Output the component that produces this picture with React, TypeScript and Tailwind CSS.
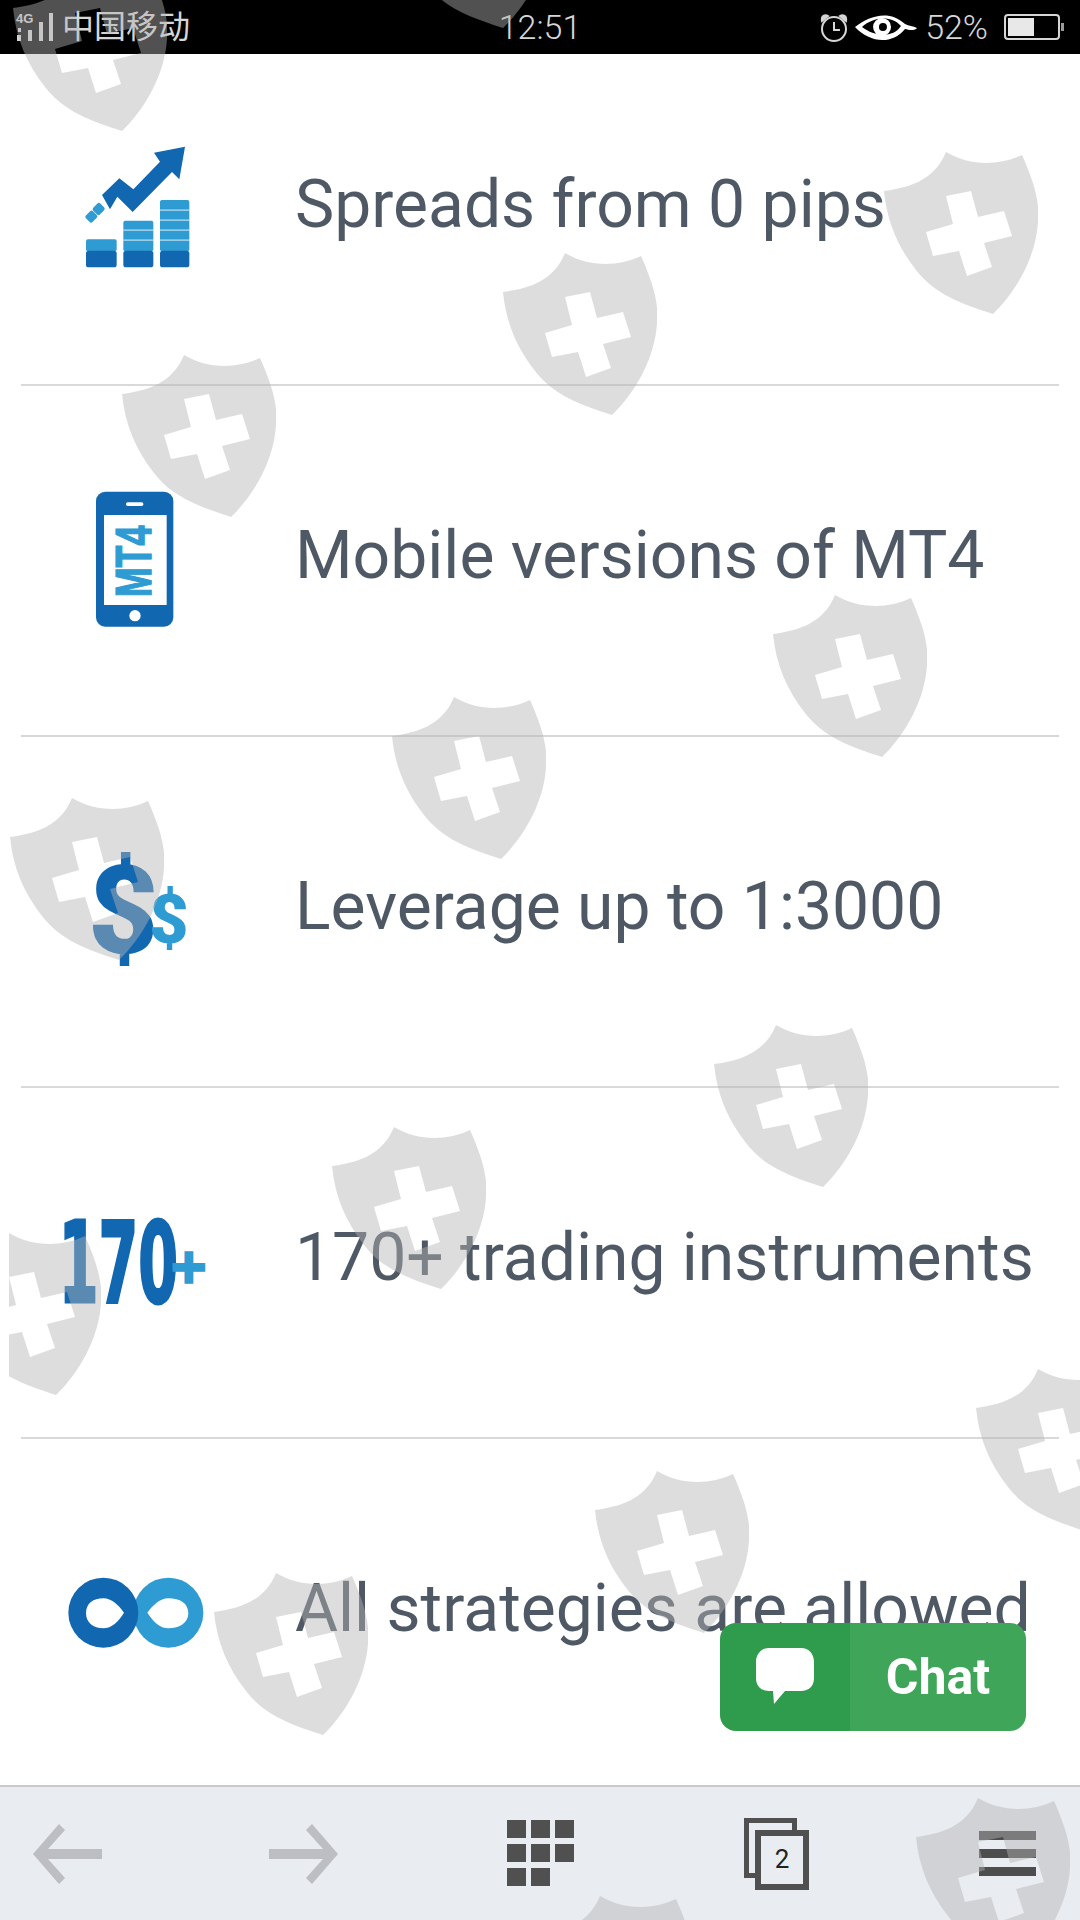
import React from "react";

const DARK = "#1267b1";
const LIGHT = "#2f9bd3";

const shields = [
  [13, -31], [394, -134], [884, 152], [503, 253], [122, 355], [773, 595], [392, 697], [10, 798],
  [714, 1025], [332, 1127], [-53, 1233], [976, 1369], [595, 1471], [214, 1573], [916, 1798], [538, 1896],
];

function Shields() {
  return (
    <div className="absolute top-0 bottom-0 left-[9px] right-0 overflow-hidden pointer-events-none">
      {shields.map(([x, y]) => (
        <svg key={x + "-" + y} width="154" height="162" viewBox="0 0 154 162" className="absolute" style={{ left: x - 9, top: y }}>
          <path
            fillRule="evenodd"
            fill="#b4b4b4"
            fillOpacity="0.45"
            d="M0 39C22 36 50 30 62 0C85 14 115 14 138 3C150 30 156 50 154 70C152 105 132 140 109 162C78 152 50 142 32 118C14 95 3 70 0 39ZM62 44L87 39L94 65L120 59L128 84L100 91L108 115L83 124L75 99L49 104L42 80L69 72Z"
          />
        </svg>
      ))}
    </div>
  );
}

function ChartIcon() {
  return (
    <svg width="180" height="160" viewBox="-60 0 540 480">
      <path fill={DARK} d="M126 195L178 145L220 178L300 95L282 68L375 50L358 148L336 126L218 246L172 200L150 238Z" />
      <rect x="102" y="222" width="28" height="30" rx="6" fill={LIGHT} transform="rotate(45 116 237)" />
      <rect x="80" y="245" width="28" height="30" rx="6" fill={LIGHT} transform="rotate(45 94 260)" />
      <rect x="78" y="328" width="92" height="36" rx="6" fill={LIGHT} />
      <rect x="190" y="272" width="90" height="92" rx="6" fill={LIGHT} />
      <rect x="300" y="210" width="88" height="154" rx="6" fill={LIGHT} />
      <g fill="#ffffff" fillOpacity="0.5">
        <rect x="190" y="298" width="90" height="5" />
        <rect x="190" y="328" width="90" height="5" />
        <rect x="300" y="238" width="88" height="5" />
        <rect x="300" y="268" width="88" height="5" />
        <rect x="300" y="298" width="88" height="5" />
        <rect x="300" y="328" width="88" height="5" />
      </g>
      <rect x="78" y="362" width="92" height="50" rx="8" fill={DARK} />
      <rect x="190" y="362" width="90" height="50" rx="8" fill={DARK} />
      <rect x="300" y="362" width="88" height="50" rx="8" fill={DARK} />
    </svg>
  );
}

function PhoneIcon() {
  return (
    <svg width="180" height="160" viewBox="-60 33 540 480">
      <rect x="108" y="65" width="232" height="405" rx="28" fill={DARK} />
      <rect x="132" y="135" width="188" height="270" fill="#ffffff" />
      <rect x="198" y="97" width="52" height="11" rx="5" fill="#ffffff" />
      <circle cx="225" cy="437" r="17" fill="#ffffff" />
      <text
        transform="translate(272 382) rotate(-90)"
        fontFamily="'Liberation Sans', sans-serif"
        fontWeight="700"
        fontSize="150"
        textLength="215"
        lengthAdjust="spacingAndGlyphs"
        fill={LIGHT}
        stroke={LIGHT}
        strokeWidth="4"
      >
        MT4
      </text>
    </svg>
  );
}

function DollarIcon() {
  return (
    <svg width="180" height="160" viewBox="120 126 540 480">
      <text x="264" y="490" fontFamily="Roboto, sans-serif" fontWeight="900" fontSize="365" fill={DARK}>
        $
      </text>
      <text x="447" y="458" fontFamily="Roboto, sans-serif" fontWeight="900" fontSize="205" fill={LIGHT}>
        $
      </text>
    </svg>
  );
}

function PlusIcon() {
  return (
    <svg width="180" height="160" viewBox="120 -21 540 480">
      <text x="176" y="336" fontFamily="'DejaVu Sans', sans-serif" fontWeight="700" fontSize="335" textLength="358" lengthAdjust="spacingAndGlyphs" fill={DARK} stroke={DARK} strokeWidth="9">
        170
      </text>
      <text x="508" y="276" fontFamily="'DejaVu Sans', sans-serif" fontWeight="700" fontSize="140" fill={LIGHT} stroke={LIGHT} strokeWidth="10">
        +
      </text>
    </svg>
  );
}

function InfinityIcon() {
  return (
    <svg width="180" height="160" viewBox="-30 -108 540 480" fillRule="evenodd">
      <path
        fill={LIGHT}
        d="M250 128A105 105 0 1 1 460 128A105 105 0 1 1 250 128ZM292 128C310 155 330 175 355 175C390 175 415 158 415 130C415 100 390 85 355 85C330 85 310 105 292 128Z"
      />
      <path
        fill={DARK}
        d="M55 128A105 105 0 1 1 265 128A105 105 0 1 1 55 128ZM108 130C108 158 130 175 160 175C185 175 205 155 222 128C205 105 185 85 160 85C130 85 108 100 108 130Z"
      />
    </svg>
  );
}

const rows = [
  { text: "Spreads from 0 pips", icon: <ChartIcon /> },
  { text: "Mobile versions of MT4", icon: <PhoneIcon /> },
  { text: "Leverage up to 1:3000", icon: <DollarIcon /> },
  { text: "170+ trading instruments", icon: <PlusIcon /> },
  { text: "All strategies are allowed", icon: <InfinityIcon /> },
];

function StatusBar() {
  return (
    <div className="h-[54px] shrink-0 bg-black flex items-center justify-between text-[#d6d6d6] text-[34px] font-['Roboto','Noto_Sans_CJK_SC',sans-serif] font-light">
      <div className="flex items-center w-[340px]">
        <svg width="58" height="54" viewBox="0 0 58 54" className="ml-[13px] mr-[-9px]">
          <text x="3" y="23" fontFamily="'Liberation Sans', sans-serif" fontWeight="700" fontSize="13" fill="#d6d6d6">4G</text>
          <rect x="15" y="30" width="4" height="11" fill="#d6d6d6" />
          <rect x="26" y="22" width="4" height="19" fill="#d6d6d6" />
          <rect x="36" y="13" width="4" height="28" fill="#d6d6d6" />
          <rect x="4" y="35" width="4" height="6" fill="#d6d6d6" />
          <rect x="5" y="28" width="3" height="4" fill="#d6d6d6" />
        </svg>
        <span className="leading-none text-[32px] font-normal">中国移动</span>
      </div>
      <span className="leading-none">12:51</span>
      <div className="flex items-center justify-end w-[340px]">
        <svg width="30" height="32" viewBox="0 0 30 32" fill="none" stroke="#d6d6d6" strokeWidth="2" className="mr-[6px]">
          <circle cx="15" cy="18" r="12" />
          <path d="M15 11V19H21" />
          <path d="M3 10C2 5 6 3 9 5L3 10ZM27 10C28 5 24 3 21 5L27 10Z" fill="#d6d6d6" />
        </svg>
        <svg width="62" height="30" viewBox="0 0 62 30" className="mr-[8px]">
          <path fill="#ffffff" fillRule="evenodd" d="M0 15C14 4 34 -3 50 12C54 14 58 14 62 16C60 19 54 18 50 17C36 34 14 30 0 15ZM7 15C20 25 38 26 46 14C36 3 18 5 7 15Z" />
          <path fill="#ffffff" fillRule="evenodd" d="M27 6A9 9 0 1 0 27.1 24A9 9 0 1 0 27 6ZM28 11A4 4 0 1 1 27.9 19A4 4 0 1 1 28 11Z" />
        </svg>
        <span className="leading-none">52%</span>
        <svg width="60" height="26" viewBox="0 0 60 26" className="ml-[16px] mr-[16px]">
          <rect x="1" y="1" width="54" height="24" rx="3" fill="none" stroke="#d6d6d6" strokeWidth="2" />
          <rect x="4" y="4" width="26" height="18" fill="#e8e8e8" />
          <rect x="57" y="9" width="3" height="8" fill="#9a9a9a" />
        </svg>
      </div>
    </div>
  );
}

function Toolbar() {
  return (
    <div className="h-[135px] shrink-0 bg-[#e9ecf0] border-t-2 border-[#c9c9c9] flex items-center pl-[33px]">
      <svg width="69" height="60" viewBox="0 0 69 60" fill="#bdbdc4">
        <path d="M0 30L26 0L32 6L15 25H69V35H15L32 54L26 60Z" />
      </svg>
      <svg width="69" height="60" viewBox="0 0 69 60" fill="#bdbdc4" className="ml-[167px]">
        <path d="M69 30L43 0L37 6L54 25H0V35H54L37 54L43 60Z" />
      </svg>
      <div className="grid grid-cols-3 gap-x-[5px] gap-y-[6px] w-[67px] ml-[169px] mb-[2px]">
        {[0, 1, 2, 3, 4, 5, 6, 7].map((i) => (
          <div key={i} className="h-[18px] bg-[#505050]" />
        ))}
      </div>
      <div className="relative w-[65px] h-[72px] ml-[170px]">
        <div className="absolute left-0 top-0 w-[53px] h-[60px] border-[5px] border-[#505050]" />
        <div className="absolute right-0 bottom-0 w-[54px] h-[60px] border-[6px] border-[#505050] bg-[#e9ecf0] flex items-center justify-center text-[26px] text-[#222] font-['Roboto',sans-serif]">
          2
        </div>
      </div>
      <div className="flex flex-col gap-[9px] w-[57px] ml-[170px]">
        <div className="h-[9px] bg-[#4d4d4d]" />
        <div className="h-[9px] bg-[#4d4d4d]" />
        <div className="h-[9px] bg-[#4d4d4d]" />
      </div>
    </div>
  );
}

export default function App() {
  return (
    <div className="relative w-[1080px] h-[1920px] overflow-hidden bg-white flex flex-col font-['Roboto',sans-serif]">
      <StatusBar />
      <div className="relative flex-1 overflow-hidden">
        <div className="mt-[-19px] mx-[21px]">
          {rows.map((r) => (
            <div key={r.text} className="h-[351px] border-b-2 border-[#d9d9d9] flex items-center">
              <div className="w-[274px] shrink-0 pl-[19px]">{r.icon}</div>
              <span className="text-[66px] leading-none whitespace-nowrap text-[#4f5965] -translate-y-[5px]">{r.text}</span>
            </div>
          ))}
        </div>
      </div>
      <Toolbar />
      <Shields />
      <div className="absolute left-[720px] top-[1623px] w-[306px] h-[108px] rounded-[16px] overflow-hidden flex">
        <div className="w-[130px] bg-[#2f9b4c] flex items-center justify-center">
          <svg width="60" height="58" viewBox="0 0 60 58" fill="#ffffff">
            <path d="M14 0H46C54 0 59 6 59 14V30C59 38 54 43 46 43H30L19 56L18 43H14C6 43 1 38 1 30V14C1 6 6 0 14 0Z" />
          </svg>
        </div>
        <div className="flex-1 bg-[#3fa659] flex items-center justify-center text-white font-bold text-[50px]">Chat</div>
      </div>
    </div>
  );
}
